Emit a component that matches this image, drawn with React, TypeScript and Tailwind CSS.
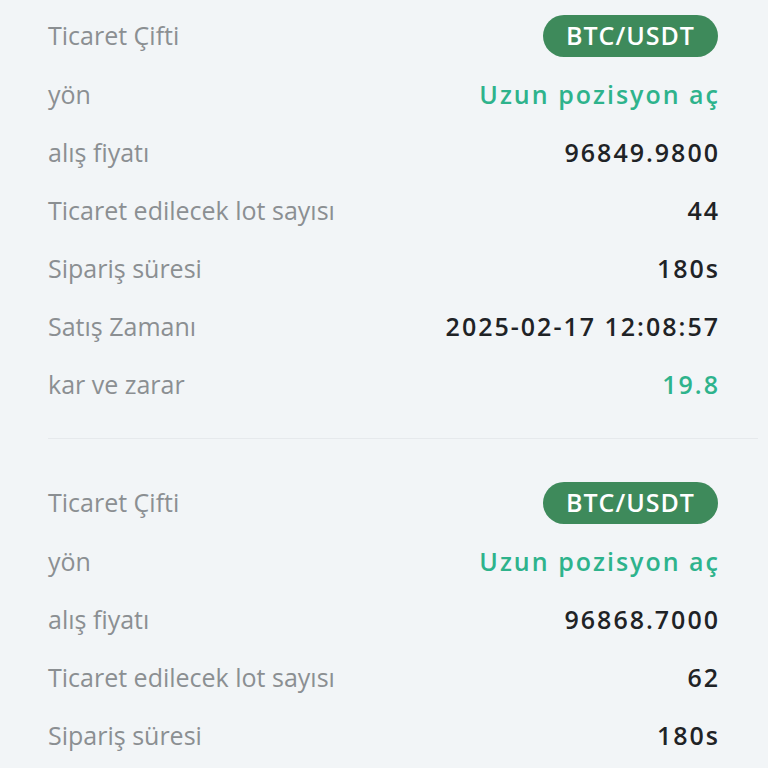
import React from "react";

type Row = { label: string; value: string; kind?: "badge" | "green" | "dark" };

const cards: Row[][] = [
  [
    { label: "Ticaret Çifti", value: "BTC/USDT", kind: "badge" },
    { label: "yön", value: "Uzun pozisyon aç", kind: "green" },
    { label: "alış fiyatı", value: "96849.9800" },
    { label: "Ticaret edilecek lot sayısı", value: "44" },
    { label: "Sipariş süresi", value: "180s" },
    { label: "Satış Zamanı", value: "2025-02-17 12:08:57" },
    { label: "kar ve zarar", value: "19.8", kind: "green" },
  ],
  [
    { label: "Ticaret Çifti", value: "BTC/USDT", kind: "badge" },
    { label: "yön", value: "Uzun pozisyon aç", kind: "green" },
    { label: "alış fiyatı", value: "96868.7000" },
    { label: "Ticaret edilecek lot sayısı", value: "62" },
    { label: "Sipariş süresi", value: "180s" },
  ],
];

function RowView({ row }: { row: Row }) {
  return (
    <div className={`flex items-center justify-between ${row.kind === "badge" ? "h-[60px]" : "h-[58px]"}`}>
      <span className="text-[25px] text-[#8b8f92]">{row.label}</span>
      {row.kind === "badge" ? (
        <span className="flex h-[42px] w-[175px] items-center justify-center rounded-full bg-[#3e8a5b] text-[25px] font-semibold tracking-[1px] text-white">
          {row.value}
        </span>
      ) : (
        <span
          className={`-mr-[2px] text-[25px] font-semibold tracking-[2px] ${
            row.kind === "green" ? "text-[#2eb38c]" : "text-[#1f2326]"
          }`}
        >
          {row.value}
        </span>
      )}
    </div>
  );
}

export default function App() {
  return (
    <div
      className="h-[768px] w-[768px] overflow-hidden bg-[#f2f5f7] pt-[6px]"
      style={{ fontFamily: '"Open Sans", "Noto Sans", sans-serif' }}
    >
      {cards.map((card, i) => (
        <div key={i} className="pl-[48px]">
          <div className="pr-[50px]">
            {card.map((r, j) => (
              <RowView key={j} row={r} />
            ))}
          </div>
          {i === 0 && <div className="mb-[34px] mr-[10px] mt-[24px] h-[1px] bg-[#e6e9ec]" />}
        </div>
      ))}
    </div>
  );
}
